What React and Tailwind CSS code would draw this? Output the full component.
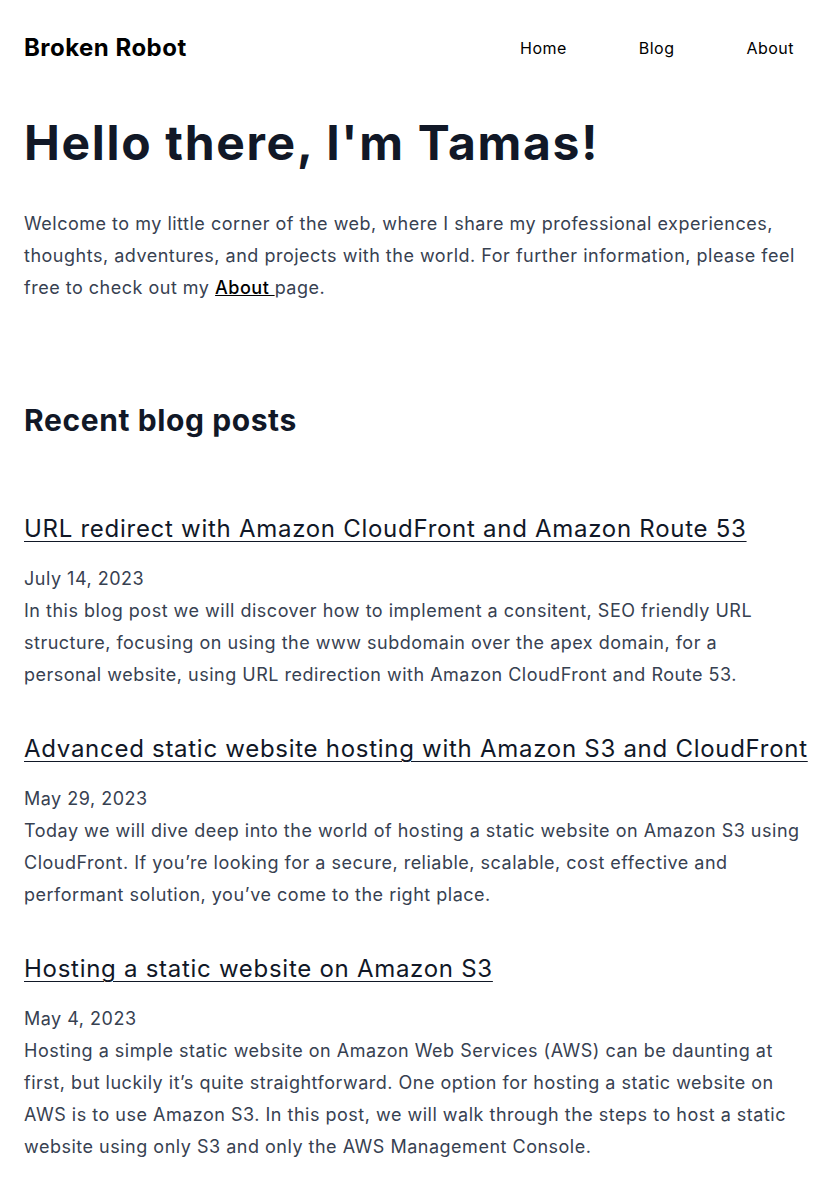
import React from "react";

const posts = [
  {
    title: "URL redirect with Amazon CloudFront and Amazon Route 53",
    date: "July 14, 2023",
    summary:
      "In this blog post we will discover how to implement a consitent, SEO friendly URL structure, focusing on using the www subdomain over the apex domain, for a personal\u00a0website, using URL redirection with Amazon CloudFront and Route 53.",
  },
  {
    title: "Advanced static website hosting with Amazon S3 and CloudFront",
    date: "May 29, 2023",
    summary:
      "Today we will dive deep into the world of hosting a static website on Amazon S3 using CloudFront. If you’re looking for a secure, reliable, scalable, cost effective and performant solution, you’ve come to the right place.",
  },
  {
    title: "Hosting a static website on Amazon S3",
    date: "May 4, 2023",
    summary:
      "Hosting a simple static website on Amazon Web Services (AWS) can be daunting at first, but luckily it’s quite straightforward. One option for hosting a static website on AWS is to use Amazon S3. In this post, we will walk through the steps to host a static website using only S3 and only the AWS Management Console.",
  },
];

export default function App() {
  return (
    <div className="min-h-screen bg-white font-['Inter',sans-serif] text-[#374151]">
      <header className="flex items-center justify-between pl-6 pr-6 h-[95px]">
        <a href="#" className="text-[24px] font-bold text-black tracking-[0.02em]">
          Broken Robot
        </a>
        <nav className="flex items-center">
          <a href="#" className="px-4 text-[16px] text-black tracking-[0.03em]">Home</a>
          <a href="#" className="ml-10 px-4 text-[16px] text-black tracking-[0.03em]">Blog</a>
          <a href="#" className="ml-10 px-4 text-[16px] text-black tracking-[0.03em]">About</a>
        </nav>
      </header>

      <main className="px-6">
        <section className="pt-[14px]">
          <h1 className="text-[48px] leading-[68px] font-bold text-[#111827] tracking-[0.035em]">
            Hello there, I'm Tamas!
          </h1>
          <p className="mt-[31px] text-[18px] leading-[32px] tracking-[0.028em]">
            Welcome to my little corner of the web, where I share my professional experiences,
            thoughts, adventures, and projects with the world. For further information, please feel
            free to check out my{" "}
            <a href="#" className="underline font-medium text-black">About </a>page.
          </p>
        </section>

        <section className="mt-[96px]">
          <h2 className="text-[30px] leading-[40px] font-bold text-[#111827] tracking-[0.02em]">
            Recent blog posts
          </h2>
          <div className="mt-[71px] flex flex-col gap-[40px]">
            {posts.map((post) => (
              <article key={post.title}>
                <a href="#" className="block text-[24px] leading-[36px] text-[#111827] tracking-[0.03em] underline underline-offset-4 decoration-1">
                  {post.title}
                </a>
                <p className="mt-[16px] text-[18px] leading-[32px] tracking-[0.028em]">{post.date}</p>
                <p className="text-[18px] leading-[32px] tracking-[0.028em]">{post.summary}</p>
              </article>
            ))}
          </div>
        </section>
      </main>
    </div>
  );
}
